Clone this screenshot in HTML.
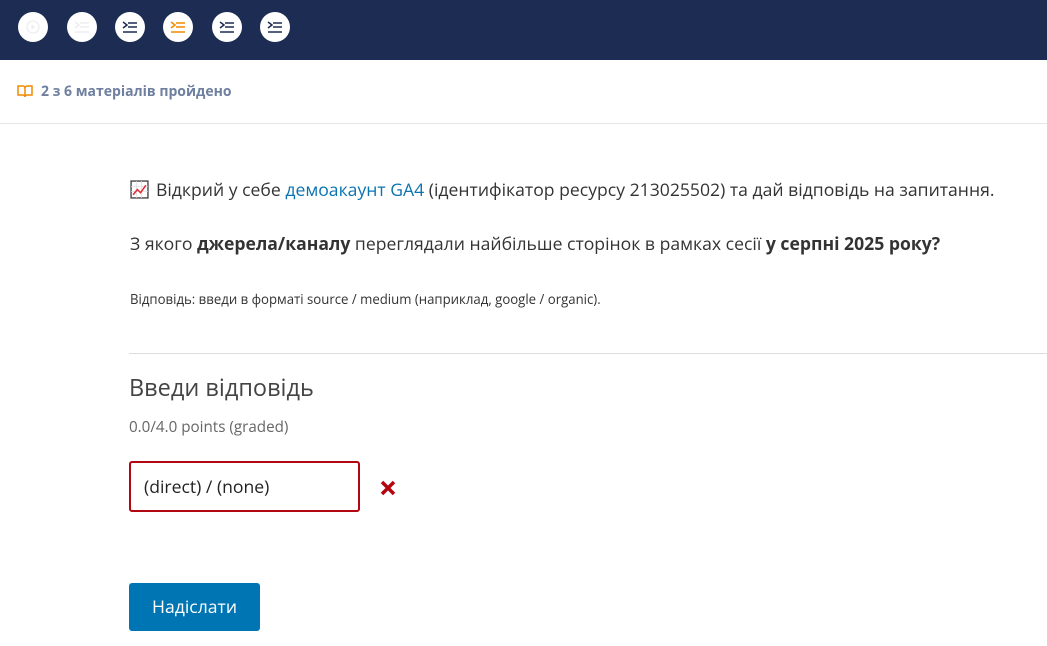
<!DOCTYPE html>
<html><head><meta charset="utf-8"><style>
body{margin:0;width:1047px;height:646px;overflow:hidden;background:#fff;font-family:"Open Sans","Liberation Sans","DejaVu Sans",sans-serif;color:#333}
.nav{position:absolute;left:0;top:0;width:1047px;height:60px;background:#1c2c52}
.c{position:absolute;top:12px;width:30px;height:30px;border-radius:50%;background:#fff}
.c svg{position:absolute;left:7px;top:8px}
.prog{position:absolute;left:17px;top:82px;font-size:14px;font-weight:bold;color:#6e7f9f}
.line{position:absolute;left:0;top:123px;width:1047px;height:1px;background:#e6e6e6}
.t{position:absolute;left:130px;white-space:nowrap}
a{color:#0a73b0;text-decoration:none}
</style></head><body>
<div class="nav">
<div class="c" style="left:18px"><svg width="16" height="14" viewBox="0 0 16 14"><circle cx="8" cy="7" r="6" fill="none" stroke="#eee" stroke-width="1.3"/><path d="M6.5 4.5v5l4-2.5z" fill="#eee"/></svg></div>
<div class="c" style="left:67px"><svg width="16" height="14"><path d="M1 2l4 3-4 3" fill="none" stroke="#eee" stroke-width="1.5"/><path d="M6 3h9M6 7h9M1 12h14" stroke="#eee" stroke-width="1.5"/></svg></div>
<div class="c" style="left:115px"><svg width="16" height="14"><path d="M1 2l4 3-4 3" fill="none" stroke="#1c2c52" stroke-width="1.5"/><path d="M6 3h9M6 7h9M1 12h14" stroke="#1c2c52" stroke-width="1.5"/></svg></div>
<div class="c" style="left:163px"><svg width="16" height="14"><path d="M1 2l4 3-4 3" fill="none" stroke="#f08a00" stroke-width="1.5"/><path d="M6 3h9M6 7h9M1 12h14" stroke="#f08a00" stroke-width="1.5"/></svg></div>
<div class="c" style="left:212px"><svg width="16" height="14"><path d="M1 2l4 3-4 3" fill="none" stroke="#1c2c52" stroke-width="1.5"/><path d="M6 3h9M6 7h9M1 12h14" stroke="#1c2c52" stroke-width="1.5"/></svg></div>
<div class="c" style="left:260px"><svg width="16" height="14"><path d="M1 2l4 3-4 3" fill="none" stroke="#1c2c52" stroke-width="1.5"/><path d="M6 3h9M6 7h9M1 12h14" stroke="#1c2c52" stroke-width="1.5"/></svg></div>
</div>
<div class="prog"><svg width="16" height="14" viewBox="0 0 16 14" style="vertical-align:-2px;margin-right:8px"><path d="M1 2h5c1 0 2 1 2 2v9c0-1-1-2-2-2H1zM15 2h-5c-1 0-2 1-2 2v9c0-1 1-2 2-2h5z" fill="none" stroke="#f08a00" stroke-width="1.5"/></svg>2 з 6 матеріалів пройдено</div>
<div class="line"></div>
<div class="t" style="top:178px;font-size:17.6px"><svg width="19" height="19" viewBox="0 0 18 18" style="vertical-align:-3px;margin-right:7px"><rect x="1" y="1" width="16" height="16" fill="#fff" stroke="#444" stroke-width="1.3"/><path d="M1 6h16M1 11h16M6 1v16M11 1v16" stroke="#ddd" stroke-width=".7"/><path d="M3 14l4-5 3 3 5-7" fill="none" stroke="#e0303a" stroke-width="1.5"/></svg>Відкрий у себе <a>демоакаунт GA4</a> (ідентифікатор ресурсу 213025502) та дай відповідь на запитання.</div>
<div class="t" style="top:232px;font-size:17.6px">З якого <b>джерела/каналу</b> переглядали найбільше сторінок в рамках сесії <b>у серпні 2025 року?</b></div>
<div class="t" style="top:290px;font-size:13.2px">Відповідь: введи в форматі source / medium (наприклад, google / organic).</div>
<div style="position:absolute;left:129px;top:353px;width:918px;height:1px;background:#ddd"></div>
<div class="t" style="left:129px;top:371px;font-size:23.5px;color:#444">Введи відповідь</div>
<div class="t" style="left:129px;top:417px;font-size:15.2px;color:#666">0.0/4.0 points (graded)</div>
<div style="position:absolute;left:129px;top:461px;width:227px;height:47px;border:2px solid #b20610;border-radius:3px"></div>
<div class="t" style="left:144px;top:475px;font-size:17.6px;color:#222">(direct) / (none)</div>
<svg style="position:absolute;left:380px;top:480px" width="16" height="16" viewBox="0 0 16 16"><path d="M2 2l12 12M14 2L2 14" stroke="#b20610" stroke-width="3.5"/></svg>
<div style="position:absolute;left:129px;top:583px;width:131px;height:48px;background:#0075b4;border-radius:3px;color:#fff;font-size:17.6px;line-height:48px;text-align:center">Надіслати</div>
</body></html>
